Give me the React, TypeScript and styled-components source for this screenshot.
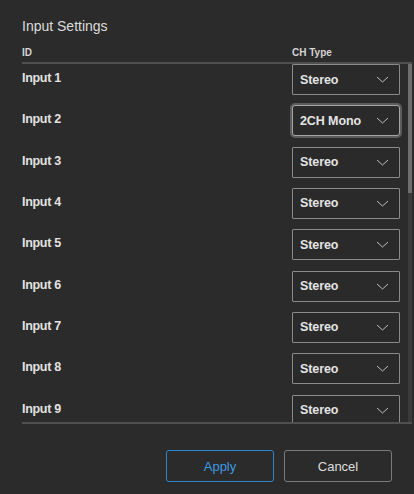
import React from 'react';
import styled, { createGlobalStyle } from 'styled-components';

const GlobalStyle = createGlobalStyle`
    html, body {
        margin: 0;
        padding: 0;
        background: #2b2b2b;
    }
    * {
        box-sizing: border-box;
    }
`;

const Dialog = styled.div`
    width: 414px;
    height: 494px;
    background: #2b2b2b;
    font-family: "Liberation Sans", Arial, sans-serif;
    color: #e0e0e0;
    display: flex;
    flex-direction: column;
    overflow: hidden;
`;

const Title = styled.h1`
    margin: 18px 0 0 22px;
    font-size: 14px;
    line-height: 16px;
    font-weight: normal;
    color: #dcdcdc;
`;

const Table = styled.div`
    margin: 0 2px 0 22px;
    display: flex;
    flex-direction: column;
`;

const HeaderRow = styled.div`
    display: grid;
    grid-template-columns: 270px 1fr;
    padding: 13px 0 3px;
    font-size: 10px;
    line-height: 12px;
    font-weight: bold;
    color: #d4d4d4;
    border-bottom: 2px solid #505050;
`;

const Body = styled.div`
    height: 360px;
    display: flex;
    border-bottom: 2px solid #505050;
`;

const List = styled.div`
    flex: 1;
    overflow-y: scroll;
    scrollbar-width: none;

    &::-webkit-scrollbar {
        display: none;
    }
`;

/* drawn scrollbar: the headless browser hides native ones */
const ScrollTrack = styled.div`
    width: 4px;
    flex: none;
    background: #3a3a3a;
    display: flex;
    flex-direction: column;
`;

const ScrollThumb = styled.div`
    background: #6e6e6e;
    flex: none;
`;

const Row = styled.div`
    display: grid;
    grid-template-columns: 270px 108px;
    align-items: center;
    height: 41.33px;
    padding-bottom: 10.33px;
`;

const Label = styled.span`
    font-size: 12.5px;
    font-weight: bold;
    letter-spacing: -0.3px;
    color: #e2e2e2;
    margin-bottom: 3px;
`;

const Select = styled.div<{ $focused?: boolean }>`
    height: 31px;
    display: flex;
    align-items: center;
    justify-content: space-between;
    padding: 0 10px 0 7px;
    border: 1px solid ${p => (p.$focused ? '#a4a4a4' : '#8a8a8a')};
    border-radius: ${p => (p.$focused ? '3px' : '1px')};
    box-shadow: ${p => (p.$focused ? '0 0 0 2px #5c5c5c' : 'none')};
    background: #2a2a2a;
    font-size: 12.5px;
    font-weight: bold;
    letter-spacing: -0.1px;
    color: #e4e4e4;
    cursor: pointer;
`;

const Chevron = styled.svg`
    width: 13px;
    height: 7px;
    flex: none;
`;

const Footer = styled.div`
    display: flex;
    justify-content: flex-end;
    gap: 10px;
    padding: 26px 22px 0;
`;

const Button = styled.button<{ $primary?: boolean }>`
    width: 108px;
    height: 32px;
    border-radius: 3px;
    background: transparent;
    border: 1.5px solid ${p => (p.$primary ? '#2d86cc' : '#7a7a7a')};
    color: ${p => (p.$primary ? '#3c9be2' : '#dedede')};
    font-family: "Liberation Sans", Arial, sans-serif;
    font-size: 13px;
    cursor: pointer;
`;

const inputs = Array.from({ length: 24 }, (_, i) => ({
    id: `Input ${i + 1}`,
    type: i === 1 ? '2CH Mono' : 'Stereo',
}));

const VISIBLE = 358;
const ROW = 41.33;

const App: React.FC = () => {
    const thumb = Math.round((VISIBLE * VISIBLE) / (inputs.length * ROW));

    return (
        <>
            <GlobalStyle />
            <Dialog>
                <Title>Input Settings</Title>
                <Table>
                    <HeaderRow>
                        <span>ID</span>
                        <span>CH Type</span>
                    </HeaderRow>
                    <Body>
                        <List>
                            {inputs.map((input, i) => (
                                <Row key={input.id}>
                                    <Label>{input.id}</Label>
                                    <Select $focused={i === 1}>
                                        <span>{input.type}</span>
                                        <Chevron viewBox="0 0 13 7">
                                            <path d="M1 1 L6.5 6 L12 1" fill="none" stroke="#bdbdbd" strokeWidth="1" />
                                        </Chevron>
                                    </Select>
                                </Row>
                            ))}
                        </List>
                        <ScrollTrack>
                            <ScrollThumb style={{ height: thumb }} />
                        </ScrollTrack>
                    </Body>
                </Table>
                <Footer>
                    <Button $primary>Apply</Button>
                    <Button>Cancel</Button>
                </Footer>
            </Dialog>
        </>
    );
};

export default App;
